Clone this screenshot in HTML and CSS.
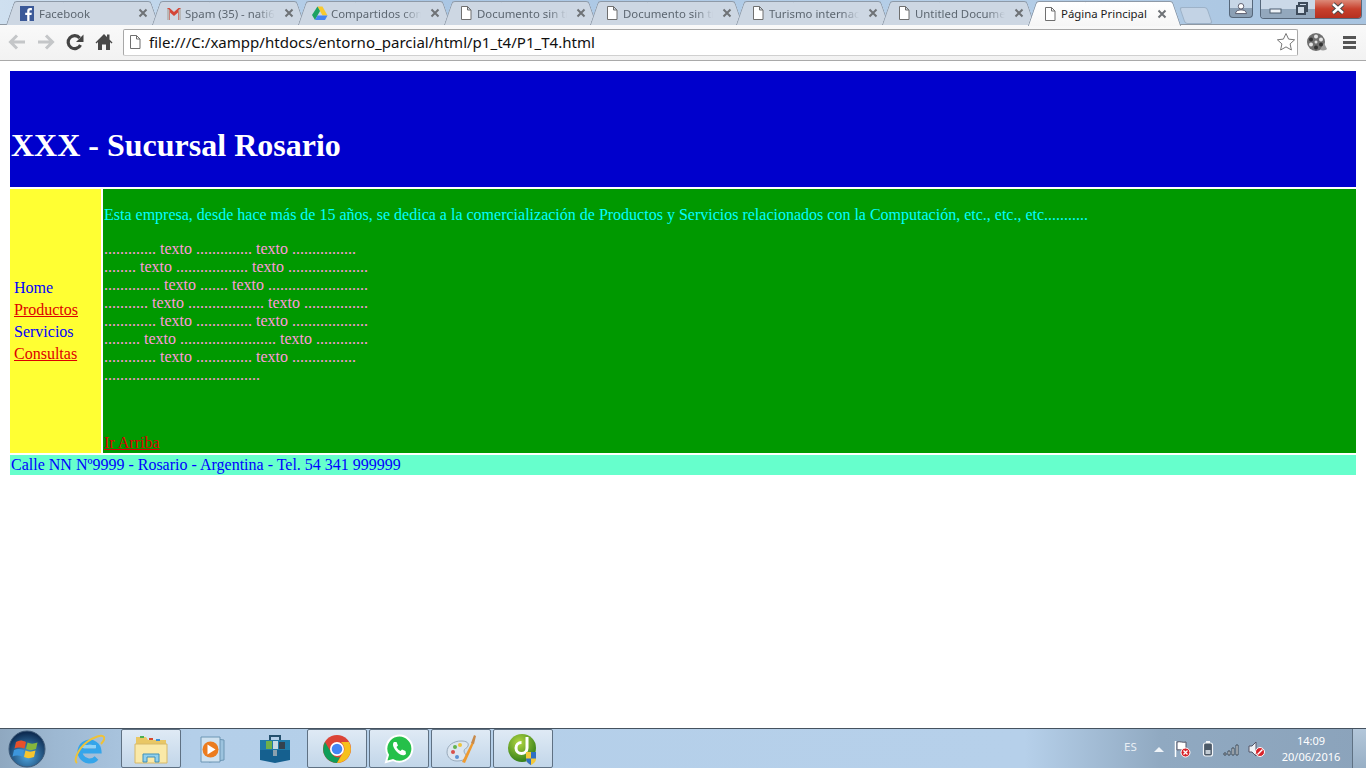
FILE: index.html
```html
<!DOCTYPE html>
<html>
<head>
    <meta charset="UTF-8">
    <title>Página Principal</title>
    <link rel="stylesheet" href="styles.css">
</head>
<body>
<svg class="sprite" width="0" height="0">
    <symbol id="doc" viewBox="0 0 16 16"><path d="M3.5 1.5h6l3.5 3.5v9.500h-9.500z M9.500 1.500v3.500h3.500" fill="#fff" stroke="#6f6f6f"/></symbol>
    <symbol id="cross" viewBox="0 0 10 10"><path d="M1.500 1.500l7 7M8.500 1.500l-7 7" stroke="#6e7276" stroke-width="2" fill="none"/></symbol>
</svg>

<div class="tabstrip">
    <div class="tab">
        <svg class="tab-icon" viewBox="0 0 16 16"><rect width="14" height="15" y="1" fill="#3b5998"/><path d="M9.500 16v-6h2l.3-2.300h-2.300v-1.400c0-.7.2-1.100 1.100-1.100h1.300v-2.100c-.3 0-1-.1-1.800-.1-1.800 0-2.900 1.100-2.900 3v1.700h-2v2.300h2v6z" fill="#fff"/></svg>
        <span class="tab-title">Facebook</span>
        <svg class="tab-close"><use href="#cross"/></svg>
    </div>
    <div class="tab">
        <svg class="tab-icon" viewBox="0 0 16 16"><path d="M1 3h2.500l4.500 4 4.500-4h2.500v12h-3v-7.500l-4 3.500-4-3.500v7.500h-3z" fill="#d44638"/><path d="M1 15v-12l2.500 2v10zM15 15v-12l-2.500 2v10z" fill="#b9b9b9"/></svg>
        <span class="tab-title">Spam (35) - nati6</span>
        <svg class="tab-close"><use href="#cross"/></svg>
    </div>
    <div class="tab">
        <svg class="tab-icon" viewBox="0 0 16 16"><path d="M5.500 1.500h5l5 9h-5z" fill="#f7c92f"/><path d="M5.500 1.500l2.500 4.500-5 9-3-5z" fill="#1da261"/><path d="M3 15l2.500-4.500h10l-2.500 4.500z" fill="#4584f0"/></svg>
        <span class="tab-title">Compartidos con</span>
        <svg class="tab-close"><use href="#cross"/></svg>
    </div>
    <div class="tab">
        <svg class="tab-icon"><use href="#doc"/></svg>
        <span class="tab-title">Documento sin tí</span>
        <svg class="tab-close"><use href="#cross"/></svg>
    </div>
    <div class="tab">
        <svg class="tab-icon"><use href="#doc"/></svg>
        <span class="tab-title">Documento sin tí</span>
        <svg class="tab-close"><use href="#cross"/></svg>
    </div>
    <div class="tab">
        <svg class="tab-icon"><use href="#doc"/></svg>
        <span class="tab-title">Turismo internaci</span>
        <svg class="tab-close"><use href="#cross"/></svg>
    </div>
    <div class="tab">
        <svg class="tab-icon"><use href="#doc"/></svg>
        <span class="tab-title">Untitled Docume</span>
        <svg class="tab-close"><use href="#cross"/></svg>
    </div>
    <div class="tab active">
        <svg class="tab-icon"><use href="#doc"/></svg>
        <span class="tab-title">Página Principal</span>
        <svg class="tab-close"><use href="#cross"/></svg>
    </div>
    <div class="newtab"></div>

    <div class="win-user">
        <svg viewBox="0 0 24 18" width="24" height="18"><circle cx="12" cy="6" r="3" fill="#fff" stroke="#556"/><path d="M6 14c0-3 3-4 6-4s6 1 6 4z" fill="#fff" stroke="#556"/></svg>
    </div>
    <div class="win-buttons">
        <div class="win-btn min"><svg viewBox="0 0 28 18" width="28" height="18"><rect x="9" y="9" width="11" height="4" fill="#eef3f8" stroke="#4c5c6e"/></svg></div>
        <div class="win-btn max"><svg viewBox="0 0 26 18" width="26" height="18"><rect x="10" y="3" width="8" height="8" fill="none" stroke="#3e4c5c" stroke-width="2"/><rect x="8" y="6" width="8" height="8" fill="#cfdbe7" stroke="#3e4c5c" stroke-width="2"/></svg></div>
        <div class="win-btn close"><svg viewBox="0 0 46 18" width="46" height="18"><path d="M18 4l10 9M28 4l-10 9" stroke="#4a4a4a" stroke-width="4.500"/><path d="M18 4l10 9M28 4l-10 9" stroke="#fff" stroke-width="2.500"/></svg></div>
    </div>
</div>

<div class="toolbar">
    <svg class="tool" viewBox="0 0 20 20"><path d="M18 10h-14M10 3.500l-6.500 6.500 6.500 6.500" fill="none" stroke="#c4c6c8" stroke-width="3"/></svg>
    <svg class="tool" viewBox="0 0 20 20"><path d="M2 10h14M10 3.500l6.500 6.500-6.500 6.500" fill="none" stroke="#c4c6c8" stroke-width="3"/></svg>
    <svg class="tool" viewBox="0 0 20 20"><path d="M15.500 13a6.500 6.500 0 1 1-.8-7" fill="none" stroke="#444" stroke-width="3.200"/><path d="M18.500 2.500v7.500h-7.500z" fill="#444"/></svg>
    <svg class="tool" viewBox="0 0 20 20"><path d="M10 2l-8.500 8.500 1 1 1.500-1.500v8h4v-5.500h4v5.500h4v-8l1.500 1.500 1-1-3-3v-5h-2.500v2.500z" fill="#484848"/></svg>
    <div class="omnibox">
        <svg class="omni-doc"><use href="#doc"/></svg>
        <span class="url">file:///C:/xampp/htdocs/entorno_parcial/html/p1_t4/P1_T4.html</span>
        <svg class="omni-star" viewBox="0 0 20 20"><path d="M10 1.500l2.600 5.600 6 .7-4.500 4.100 1.300 6.100-5.400-3.100-5.400 3.100 1.300-6.100-4.500-4.100 6-.7z" fill="#fff" stroke="#777"/></svg>
    </div>
    <svg class="reel" viewBox="0 0 22 22">
        <circle cx="10" cy="11" r="9" fill="#6f6f6f"/><path d="M14 19c4 1 6 0 7-1l-3-6z" fill="#9a9a9a"/>
        <circle cx="10" cy="11" r="1.500" fill="#ddd"/><circle cx="10" cy="5.500" r="2" fill="#e4e4e4"/><circle cx="10" cy="16.500" r="2" fill="#333"/><circle cx="5" cy="8.500" r="2" fill="#333"/><circle cx="15" cy="8.500" r="2" fill="#e4e4e4"/><circle cx="5" cy="13.500" r="2" fill="#e4e4e4"/><circle cx="15" cy="13.500" r="2" fill="#333"/>
    </svg>
    <div class="menu-btn"><i></i><i></i><i></i></div>
</div>

<div class="page">
    <div class="layout">
        <header class="top">
            <h1>XXX - Sucursal Rosario</h1>
        </header>
        <nav class="side">
            <a class="plain" href="#">Home</a>
            <a href="#">Productos</a>
            <a class="plain" href="#">Servicios</a>
            <a href="#">Consultas</a>
        </nav>
        <main class="main">
            <p class="intro">Esta empresa, desde hace más de 15 años, se dedica a la comercialización de Productos y Servicios relacionados con la Computación, etc., etc., etc...........</p>
            <p class="filler">
                ............. texto .............. texto ................<br>
                ........ texto .................. texto ....................<br>
                .............. texto ....... texto .........................<br>
                ........... texto ................... texto ................<br>
                ............. texto .............. texto ...................<br>
                ......... texto ........................ texto .............<br>
                ............. texto .............. texto ................<br>
                .......................................
            </p>
            <a class="up" href="#">Ir Arriba</a>
        </main>
        <footer class="foot">Calle NN Nº9999 - Rosario - Argentina - Tel. 54 341 999999</footer>
    </div>
</div>

<div class="taskbar">
    <div class="start">
        <svg viewBox="0 0 38 38" width="38" height="38">
            <defs><radialGradient id="orb" cx="50%" cy="70%" r="65%"><stop offset="0" stop-color="#4fa6e0"/><stop offset="1" stop-color="#0e2c52"/></radialGradient></defs>
            <circle cx="19" cy="19" r="18" fill="url(#orb)" stroke="#3f5a78"/>
            <path d="M8 12c3-2 6-2 10 0l-1.500 6.500c-4-1.500-7-1.500-10 0z" fill="#e8502a"/>
            <path d="M19.500 12.500c3 1.500 6 1.500 10 0l-1.500 6.500c-4 1.500-7 1.500-10 0z" fill="#86b63c"/>
            <path d="M6 20c3-1.500 6-1.500 10 0l-1.500 6.500c-4-1.500-7-1.500-10 0z" fill="#3d96dc"/>
            <path d="M17.500 20.500c3 1.500 6 1.500 10 0l-1.500 6.500c-4 1.500-7 1.500-10 0z" fill="#f7c52e"/>
        </svg>
    </div>
    <div class="task-items">
        <div class="task">
            <svg viewBox="0 0 32 32" width="32" height="32"><path d="M8 18h18a9.500 9.500 0 1 0-2.500 7" fill="none" stroke="#35a5ea" stroke-width="5"/><path d="M9 13.500h14" stroke="#8fd2f6" stroke-width="3"/><path d="M4 30c-4-3 2-15 10-21 7-5 15-8 17-5 1 2-1 5-3 7" fill="none" stroke="#eec23a" stroke-width="2"/></svg>
        </div>
        <div class="task open">
            <svg viewBox="0 0 34 32" width="34" height="32"><path d="M2 4h10l2 3h18v8h-30z" fill="#e9c765"/><rect x="6" y="3" width="4" height="2" fill="#4caf50"/><rect x="15" y="5" width="4" height="2" fill="#d9472b"/><rect x="22" y="6" width="4" height="2" fill="#3a8fd8"/><path d="M1 11h32v19h-32z" fill="#fae9a8" stroke="#d6b868"/><path d="M9 29v-8h16v8h-4v-5h-8v5z" fill="#8fd0ee" stroke="#3f8fb8"/></svg>
        </div>
        <div class="task">
            <svg viewBox="0 0 32 32" width="32" height="32"><path d="M12 5l15 2v20l-15 2z" fill="#9cc3de" stroke="#6c96b4"/><path d="M4 4h19v25h-19z" fill="#cfe2f0" stroke="#6c96b4"/><circle cx="13.500" cy="16.500" r="8" fill="#ec7c1e"/><path d="M10.500 11.500l8 5-8 5z" fill="#fff"/></svg>
        </div>
        <div class="task">
            <svg viewBox="0 0 32 32" width="32" height="32"><path d="M11 7v-4h10v4" fill="none" stroke="#24506e" stroke-width="2"/><path d="M1 7h30v20l-15 3-15-3z" fill="#15608f"/><path d="M1 7h30v10h-30z" fill="#1f7aa8"/><rect x="7" y="8" width="6" height="8" fill="#6fb04a"/><rect x="14" y="8" width="5" height="8" fill="#c7d9e4"/><rect x="20" y="9" width="6" height="7" fill="#33424e"/><rect x="14" y="17" width="4" height="6" fill="#8aa0ae"/></svg>
        </div>
        <div class="task open">
            <svg viewBox="0 0 32 32" width="32" height="32"><circle cx="16" cy="16" r="14" fill="#db4437"/><path d="M16 30a14 14 0 0 1-12-21l7 12c2 3 5 4 8 3z" fill="#0f9d58"/><path d="M16 9h12a14 14 0 0 1-12 21l7-12c1-3 0-6-3-9z" fill="#f6c01b"/><circle cx="16" cy="16" r="7" fill="#fff"/><circle cx="16" cy="16" r="5.300" fill="#4285f4"/></svg>
        </div>
        <div class="task open">
            <svg viewBox="0 0 32 32" width="32" height="32"><path d="M3 29l2-7a13 13 0 1 1 5 5z" fill="#25c04a" stroke="#fff" stroke-width="2"/><path d="M11 9c-2 2-1 6 3 10s7 4 9 2l-.5-3-3.500-1.500-1.500 1.500c-2-1-3-2-4-4l1.500-1.500-1.500-3.500z" fill="#fff"/></svg>
        </div>
        <div class="task open">
            <svg viewBox="0 0 32 32" width="32" height="32"><path d="M2 19c0-7 7-11 14-11 6 0 8 2 7 5s-4 2-4 5 3 3 2 6-5 4-9 4c-6 0-10-4-10-9z" fill="#dce6f0" stroke="#98aabb"/><circle cx="8" cy="19" r="2" fill="#d8504a"/><circle cx="10" cy="14" r="2" fill="#62b34f"/><circle cx="15" cy="12" r="2" fill="#eec43c"/><circle cx="12" cy="24" r="2" fill="#5a92d4"/><path d="M17 29l10-20 2 1-9 20z" fill="#ee9a30"/><path d="M26 10l3-8 2 1-2 8z" fill="#c78a4c"/></svg>
        </div>
        <div class="task open">
            <svg viewBox="0 0 32 32" width="32" height="32"><defs><radialGradient id="dw" cx="40%" cy="30%" r="75%"><stop offset="0" stop-color="#b2d742"/><stop offset="1" stop-color="#2d7a16"/></radialGradient></defs><circle cx="15" cy="15" r="14" fill="url(#dw)"/><path d="M20 4v11a5.500 5.500 0 1 1-5.500-5.500" fill="none" stroke="#fff" stroke-width="3"/><path d="M19 19h10v7c0 3-3 5-5 6-2-1-5-3-5-6z" fill="#f4c93a"/><path d="M24 19h5v6.500h-5zM19 25.500h5v6.500c-2-1-5-3-5-6z" fill="#2f6fc4"/></svg>
        </div>
    </div>
    <div class="tray">
        <span class="lang">ES</span>
        <svg class="caret" viewBox="0 0 10 6" width="10" height="6"><path d="M5 0l5 5h-10z" fill="#eef3f8"/></svg>
        <svg viewBox="0 0 18 18" width="18" height="18"><path d="M2.500 1v16" stroke="#fff" stroke-width="1.500"/><path d="M4 2c3-1 6 1 9 0v8c-3 1-6-1-9 0z" fill="#fff" stroke="#556"/><circle cx="12.500" cy="12.500" r="4.500" fill="#d8232a" stroke="#fff"/><path d="M10.500 10.500l4 4M14.500 10.500l-4 4" stroke="#fff" stroke-width="1.300"/></svg>
        <svg class="battery" viewBox="0 0 12 18" width="12" height="18"><rect x="1.500" y="3" width="9" height="13" rx="2" fill="#4c5a68" stroke="#f2f5f8" stroke-width="1.200"/><rect x="4" y="1" width="4" height="2" fill="#f2f5f8"/><rect x="3.500" y="10" width="5" height="4" fill="#c3ccd4"/></svg>
        <svg viewBox="0 0 18 14" width="18" height="14"><path d="M1 11h2v2h-2zM5 9h2v4h-2zM9 6h2v7h-2zM13 3h2v10h-2z" fill="#f2f5f8" stroke="#3c4854" stroke-width="1"/></svg>
        <svg class="speaker" viewBox="0 0 18 18" width="18" height="18"><path d="M1 6h3l4-4v14l-4-4h-3z" fill="#eef2f6" stroke="#556"/><circle cx="12" cy="12" r="4.500" fill="#d8232a" stroke="#fff"/><path d="M9.500 14.500l5-5" stroke="#fff" stroke-width="1.500"/></svg>
    </div>
    <div class="clock">
        <span>14:09</span>
        <span>20/06/2016</span>
    </div>
    <div class="desktop"></div>
</div>
</body>
</html>
```

FILE: styles.css
```css
html, body {
    margin: 0;
    padding: 0;
    width: 100%;
    height: 100%;
    overflow: hidden;
}

body {
    display: flex;
    flex-direction: column;
    height: 768px;
    background: #fff;
}

.sprite {
    position: absolute;
}

/* tabs */
.tabstrip {
    display: flex;
    align-items: flex-start;
    box-sizing: border-box;
    height: 25px;
    padding: 1px 4px 0 6px;
    background: linear-gradient(90deg, #cfe0f0, #a9c6e4 30%, #b6cfe8 70%, #a8c4e0);
    border-bottom: 1px solid #8e98a3;
    font-family: "Noto Sans", sans-serif;
    font-size: 11.4px;
}

.tab {
    position: relative;
    z-index: 0;
    display: flex;
    align-items: center;
    flex: none;
    box-sizing: border-box;
    width: 153px;
    height: 24px;
    margin-right: -7px;
    padding-left: 14px;
    color: #5c6670;
}

.tab::before, .tab::after {
    content: "";
    position: absolute;
    z-index: -1;
    top: 0;
    bottom: 0;
    box-sizing: border-box;
    background: #cdd7e3;
    border-top: 1px solid #8e9aa8;
}

.tab::before {
    left: 4px;
    right: 40%;
    transform: skewX(-19deg);
    border-left: 1px solid #8e9aa8;
    border-radius: 3px 0 0 0;
}

.tab::after {
    left: 40%;
    right: 4px;
    transform: skewX(19deg);
    border-right: 1px solid #8e9aa8;
    border-radius: 0 3px 0 0;
}

.tab.active {
    z-index: 2;
    height: 25px;
    color: #1c1c1c;
}

.tab.active::before, .tab.active::after {
    background: linear-gradient(#fff, #f6f6f6);
}

.tab-icon {
    flex: none;
    width: 16px;
    height: 16px;
}

.tab-title {
    flex: none;
    width: 96px;
    margin-left: 3px;
    white-space: nowrap;
    -webkit-mask-image: linear-gradient(90deg, #000 72px, transparent 90px);
    mask-image: linear-gradient(90deg, #000 72px, transparent 90px);
}

.tab-close {
    flex: none;
    width: 10px;
    height: 10px;
    margin-left: 3px;
}

.active .tab-title {
    -webkit-mask-image: none;
    mask-image: none;
}

.active .tab-close {
    margin-left: 0;
}

.newtab {
    flex: none;
    width: 26px;
    height: 15px;
    margin: 6px 0 0 8px;
    background: #c3d3e5;
    border: 1px solid #9db2c8;
    border-radius: 3px;
    transform: skewX(19deg);
}

.win-user {
    display: flex;
    justify-content: center;
    flex: none;
    width: 24px;
    height: 18px;
    margin: -1px 0 0 19px;
    background: linear-gradient(#c7d6e6 50%, #8b9fb4 50%);
    border: 1px solid #56677a;
    border-top: none;
    border-radius: 0 0 4px 4px;
    box-sizing: border-box;
}

.win-buttons {
    display: flex;
    flex: none;
    height: 18px;
    margin: -1px 0 0 7px;
    border: 1px solid #56677a;
    border-top: none;
    border-radius: 0 0 4px 4px;
    overflow: hidden;
}

.win-btn {
    display: flex;
    background: linear-gradient(#cbd9e8 50%, #93a8bd 50%);
}

.win-btn.close {
    background: linear-gradient(#dc8a78, #c8402c 50%, #b63020);
}

/* toolbar */
.toolbar {
    display: flex;
    align-items: center;
    flex: none;
    box-sizing: border-box;
    height: 36px;
    padding: 0 10px 1px 7px;
    background: linear-gradient(#f9f9f9, #f2f2f2);
    border-bottom: 1px solid #a9a9a9;
}

.tool {
    flex: none;
    width: 20px;
    height: 20px;
    margin-right: 9px;
}

.omnibox {
    display: flex;
    align-items: center;
    flex: 1;
    box-sizing: border-box;
    height: 27px;
    padding: 0 1px 0 3px;
    background: #fff;
    border: 1px solid #a8a8a8;
    border-bottom-color: #d0d0d0;
    border-radius: 2px;
}

.omni-doc {
    flex: none;
    width: 16px;
    height: 16px;
}

.url {
    flex: 1;
    margin-left: 6px;
    font-family: "Noto Sans", sans-serif;
    font-size: 15.050px;
    color: #101010;
    white-space: nowrap;
}

.omni-star {
    flex: none;
    width: 20px;
    height: 20px;
}

.reel {
    flex: none;
    width: 22px;
    height: 22px;
    margin-left: 8px;
}

.menu-btn {
    display: flex;
    flex-direction: column;
    flex: none;
    gap: 2px;
    width: 13px;
    margin-left: 15px;
}

.menu-btn i {
    display: block;
    height: 3px;
    background: #555;
}

/* page content */
.page {
    flex: 1;
    min-height: 0;
    padding: 10px;
    background: #fff;
    font-family: "Liberation Serif", serif;
    font-size: 16px;
}

.layout {
    display: grid;
    grid-template-columns: 91px 1fr;
    grid-template-rows: 116px 264px 20px;
    gap: 2px;
}

.top {
    grid-column: 1 / 3;
    display: flex;
    align-items: flex-end;
    padding: 0 1px;
    background: #0000cc;
    color: #fff;
}

.top h1 {
    margin: 0 0 23px;
    font-size: 32px;
}

.side {
    display: flex;
    flex-direction: column;
    justify-content: center;
    padding-left: 4px;
    background: #ffff33;
    line-height: 22px;
}

.side a {
    color: #dd0000;
}

.side a.plain {
    color: #0000ff;
    text-decoration: none;
}

.main {
    display: flex;
    flex-direction: column;
    align-items: flex-start;
    box-sizing: border-box;
    padding: 1px;
    background: #009900;
    line-height: 18px;
}

.main p {
    margin: 16px 0 0;
}

.intro {
    color: #00ffff;
}

.filler {
    color: #ff99dd;
}

.up {
    margin-top: auto;
    color: #dd0000;
}

.foot {
    grid-column: 1 / 3;
    padding: 0 1px;
    background: #66ffcc;
    color: #0000ff;
    line-height: 20px;
}

/* windows taskbar */
.taskbar {
    display: flex;
    align-items: center;
    flex: none;
    box-sizing: border-box;
    height: 40px;
    background: linear-gradient(90deg, #8fa8c0, #9db8d2 4%, #b4cfe9 14%, #b6d0ea 75%, #90a9c1 85%, #8ba3bb);
    border-top: 1px solid #45525f;
    font-family: "Noto Sans", sans-serif;
    color: #fff;
}

.start {
    display: flex;
    justify-content: center;
    flex: none;
    width: 54px;
    margin-right: 5px;
}

.task-items {
    display: flex;
    flex: none;
    gap: 2px;
    height: 39px;
}

.task {
    display: flex;
    align-items: center;
    justify-content: center;
    box-sizing: border-box;
    width: 60px;
}

.task.open {
    background: linear-gradient(#dfeaf5, #c2d6e9);
    border: 1px solid #5f7183;
    border-radius: 2px;
}

.tray {
    display: flex;
    align-items: center;
    flex: none;
    gap: 9px;
    margin-left: auto;
    font-size: 11.500px;
}

.lang {
    width: 16px;
    margin: -4px 5px 0 0;
    color: #e8eef4;
}

.caret {
    margin-top: 2px;
}

.battery {
    margin-left: 2px;
}

.speaker {
    margin-left: -2px;
}

.clock {
    display: flex;
    flex-direction: column;
    align-items: center;
    flex: none;
    gap: 1px;
    width: 82px;
    margin-left: 4px;
    font-size: 11px;
    line-height: 15px;
}

.desktop {
    flex: none;
    box-sizing: border-box;
    width: 14px;
    height: 39px;
    background: linear-gradient(#b3c7da, #98afc5);
    border-left: 1px solid #5f7183;
}
```
